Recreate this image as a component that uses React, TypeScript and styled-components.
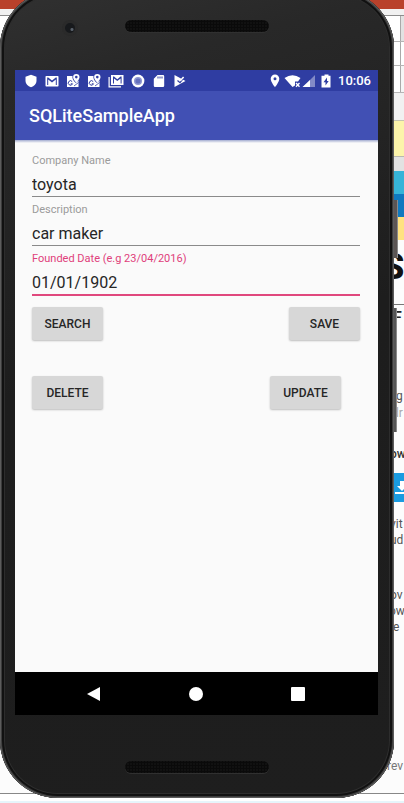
import React from "react";
import styled, { createGlobalStyle } from "styled-components";

const Global = createGlobalStyle`
  * { box-sizing: border-box; }
  body { margin: 0; background: #fcfcfc; font-family: Roboto, "Liberation Sans", sans-serif; }
  button, input { font: inherit; }
`;

const Stage = styled.div`
  display: grid;
  grid-template-columns: minmax(0, 1fr);
  min-height: 100vh;
  overflow: hidden;
`;

/* Desktop page visible around the phone */
const Backdrop = styled.div`
  grid-area: 1 / 1;
  display: flex;
  flex-direction: column;
  align-items: stretch;
  overflow: hidden;
  font-family: Roboto, "Liberation Sans", sans-serif;
`;

const Band = styled.div<{ $h: number; $bg: string; $line?: string }>`
  flex: none;
  height: ${(p) => p.$h}px;
  background: ${(p) => p.$bg};
  border-bottom: ${(p) => (p.$line ? `1px solid ${p.$line}` : "0")};
  display: flex;
  justify-content: flex-end;
`;

const Cell = styled.div<{ $bg: string }>`
  width: 4px;
  background: ${(p) => p.$bg};
  border-left: 1px solid #a9a9a9;
`;

const Snippet = styled.div<{ $h: number; $size?: number; $color?: string; $weight?: number; $w?: number }>`
  flex: none;
  align-self: flex-end;
  width: ${(p) => p.$w ?? 14}px;
  height: ${(p) => p.$h}px;
  line-height: ${(p) => p.$h}px;
  font-size: ${(p) => p.$size ?? 12}px;
  font-weight: ${(p) => p.$weight ?? 400};
  color: ${(p) => p.$color ?? "#555"};
  white-space: nowrap;
`;

const Download = styled.div`
  flex: none;
  align-self: flex-end;
  width: 14px;
  height: 29px;
  background: #1a9be0;
  display: flex;
  align-items: center;
  padding-left: 5px;
  overflow: hidden;

  svg { flex: none; }
`;

const Fill = styled.div<{ $h: number }>`
  flex: none;
  height: ${(p) => p.$h}px;
`;

const Grow = styled.div`
  flex: 1;
`;

const Device = styled.div`
  grid-area: 1 / 1;
  position: relative;
  display: flex;
  margin: -10px 6px 5px 0;
`;

const Body = styled.div`
  flex: 1;
  min-width: 0;
  display: flex;
  flex-direction: column;
  padding: 0 16px 0 15px;
  border-radius: 58px;
  background: linear-gradient(165deg, #313131 0%, #282828 12%, #1d1d1d 45%, #1e1e1e 100%);
  box-shadow: inset 0 0 0 1px #5c5c5c, inset 0 0 0 2px #3b3b3b, inset 0 0 0 4px #111, inset 0 0 0 5px #2d2d2d;
`;

const Keys = styled.div`
  width: 4px;
  padding-top: 210px;
`;

const Key = styled.div<{ $h: number; $gap: number; $w: number; $bg: string }>`
  width: ${(p) => p.$w}px;
  height: ${(p) => p.$h}px;
  margin-bottom: ${(p) => p.$gap}px;
  background: ${(p) => p.$bg};
  border-right: 1px solid #8a8a8a;
`;

const Bezel = styled.div<{ $h: number; $top: number }>`
  height: ${(p) => p.$h}px;
  padding-top: ${(p) => p.$top}px;
  display: grid;
  grid-template-columns: 1fr 144px 1fr;
  align-items: start;
  justify-items: center;
`;

const Camera = styled.div`
  width: 16px;
  height: 16px;
  border-radius: 50%;
  border: 3px solid #2a2a2a;
  background: radial-gradient(circle at 70% 65%, #5a626c 0 1px, #17191c 2px);
`;

const Speaker = styled.div`
  grid-column: 2;
  width: 100%;
  height: 12px;
  border-radius: 6px;
  background: radial-gradient(circle, #0a0a0a 1px, #1b1b1b 2px) 0 0 / 3px 3px;
  box-shadow: 0 1px 0 #303030;
`;

const Screen = styled.main`
  flex: 1;
  display: flex;
  flex-direction: column;
  background: #fafafa;
`;

const StatusBar = styled.div`
  height: 21px;
  display: flex;
  align-items: center;
  justify-content: space-between;
  padding: 0 7px 0 9px;
  background: #2f3da2;
  color: #fff;
`;

const Notices = styled.div`
  width: 163px;
  display: flex;
  align-items: center;
  justify-content: space-between;
`;

const System = styled.div`
  display: flex;
  align-items: center;
`;

const PinGap = styled.span`
  display: flex;
  margin-right: 3px;
`;

const Clock = styled.time`
  margin-left: 2px;
  font-size: 13px;
  line-height: 20px;
  font-weight: 500;
`;

const AppBar = styled.header`
  height: 49px;
  display: flex;
  align-items: center;
  padding: 0 14px;
  background: #4150b4;
  color: #fff;
`;

const Title = styled.h1`
  margin: 0;
  font-size: 18px;
  line-height: 24px;
  font-weight: 500;
`;

const Form = styled.form`
  flex: 1;
  display: flex;
  flex-direction: column;
  padding: 14px 18px 14px 17px;
  background: linear-gradient(#a3acd0, #fafafa 3px);
`;

const Field = styled.label<{ $active?: boolean }>`
  display: flex;
  flex-direction: column;
  margin-bottom: 6px;
  font-size: 11px;
  line-height: 14px;
  color: ${(p) => (p.$active ? "#e0407b" : "#9b9b9b")};
`;

const Input = styled.input<{ $active?: boolean }>`
  width: 100%;
  height: ${(p) => (p.$active ? 30 : 29)}px;
  padding: 4px 0 0;
  border: 0;
  border-bottom: ${(p) => (p.$active ? "2px solid #e0487d" : "1px solid #8a8a8a")};
  border-radius: 0;
  outline: 0;
  background: transparent;
  color: #262626;
  font-size: 16px;
`;

const Actions = styled.div<{ $top: number; $inset?: boolean }>`
  display: flex;
  justify-content: space-between;
  margin-top: ${(p) => p.$top}px;
  padding-right: ${(p) => (p.$inset ? 19 : 0)}px;
`;

const Button = styled.button`
  width: 71px;
  height: 33px;
  padding: 0;
  border: 0;
  border-radius: 2px;
  background: #d7d7d7;
  box-shadow: 0 1px 2px #bdbdbd;
  color: #262626;
  font-size: 12px;
  font-weight: 500;
`;

const NavBar = styled.nav`
  height: 43px;
  display: flex;
  align-items: center;
  justify-content: center;
  gap: 62px;
  padding-right: 2px;
  background: #000;
`;

const NavButton = styled.button`
  width: 40px;
  height: 40px;
  padding: 0;
  border: 0;
  background: none;
  color: #fff;
  display: grid;
  place-items: center;
`;

const Icon = ({ w = 14, vb = 14, children }: { w?: number; vb?: number; children: React.ReactNode }) => (
  <svg width={w} height={14} viewBox={`0 0 ${vb} 14`} fill="currentColor" aria-hidden="true">
    {children}
  </svg>
);

const MapNotice = () => (
  <Icon>
    <path d="M1 2H6.500c-.5 2.500 .6 4.500 3.300 7L12.500 6.500v6.500H1z" />
    <path d="M10.300 0a3.200 3.200 0 0 0-3.200 3.200c0 2.200 3.200 5.500 3.200 5.500s3.200-3.300 3.200-5.500A3.200 3.200 0 0 0 10.300 0zm0 1.800a1.300 1.300 0 1 1 0 2.600 1.300 1.300 0 0 1 0-2.600z" fillRule="evenodd" />
    <path d="M6.200 7.600a2.200 2.200 0 1 0 .3 2.200H4.800" fill="none" stroke="#2f3da2" />
    <path d="M8 12l4.500-3.500" stroke="#2f3da2" strokeWidth=".8" />
  </Icon>
);

export default function App() {
  return (
    <>
      <Global />
      <Stage>
        <Backdrop aria-hidden="true">
          <Band $h={9} $bg="#b9412b" />
          <Band $h={7} $bg="#f1f1f1" $line="#8c8c8c" />
          <Band $h={26} $bg="#fff" $line="#b5b5b5"><Cell $bg="#e2e2e2" /></Band>
          <Band $h={24} $bg="#fff" $line="#b5b5b5"><Cell $bg="#fff" /></Band>
          <Band $h={27} $bg="#fff" $line="#b5b5b5"><Cell $bg="#f6f6f6" /></Band>
          <Band $h={28} $bg="#f1f1f1" $line="#c5c5b0" />
          <Band $h={36} $bg="#fcf4aa" $line="#b8b8b0" />
          <Band $h={14} $bg="#e2e2e2" />
          <Band $h={23} $bg="#36b4d8" />
          <Band $h={23} $bg="#0f79bf" />
          <Band $h={23} $bg="#ffe280" />
          <Fill $h={5} />
          <Snippet $h={44} $size={36} $weight={800} $color="#111" $w={22}>S</Snippet>
          <Band $h={16} $bg="#fdfdfd" $line="#777" />
          <Snippet $h={26} $size={16} $weight={500} $color="#222" $w={11}>F</Snippet>
          <Fill $h={56} />
          <Snippet $h={18} $size={12} $w={8}>g</Snippet>
          <Snippet $h={16} $size={12} $color="#aaa" $w={12}>dr</Snippet>
          <Fill $h={24} />
          <Snippet $h={18} $weight={500} $color="#333">ow</Snippet>
          <Fill $h={10} />
          <Download>
            <svg width="14" height="16" viewBox="0 0 14 16" fill="#fff">
              <path d="M5 1h4v5h3L7 11 2 6h3zM0 12h14v2H0z" />
            </svg>
          </Download>
          <Fill $h={14} />
          <Snippet $h={16}>vit</Snippet>
          <Snippet $h={16}>ud</Snippet>
          <Fill $h={39} />
          <Snippet $h={16}>ov</Snippet>
          <Snippet $h={16} $w={15}>ow</Snippet>
          <Snippet $h={16} $w={15}>re</Snippet>
          <Fill $h={123} />
          <Snippet $h={16} $color="#777" $w={17}>rev</Snippet>
          <Band $h={20} $bg="#fcfcfc" $line="#888" />
          <Band $h={7} $bg="#fff" />
          <Grow />
          <Band $h={2} $bg="#e6f5fb" />
        </Backdrop>

        <Device>
          <Body>
            <Bezel $h={80} $top={30}>
              <Camera />
              <Speaker />
            </Bezel>
            <Screen>
              <StatusBar>
                <Notices>
                  <Icon><path d="M7 .8l5.500 2v4.200c0 3-2.300 5-5.500 6.300C3.800 12 1.500 10 1.500 7V2.800z" /></Icon>
                  <Icon>
                    <path fillRule="evenodd" d="M1.200 2h11.600q.7 0 .7.800v8.900q0 .8-.7.800H1.200q-.7 0-.7-.8V2.800q0-.8.700-.8zM2.200 3.500v7.500h1V5.500L7 8.400l3.800-2.900V11h1V3.500h-1L7 6.500l-3.800-3z" />
                  </Icon>
                  <MapNotice />
                  <MapNotice />
                  <Icon w={16} vb={16}>
                    <path d="M.5 3h1.200v9.300H13v1.200H.5z" />
                    <path fillRule="evenodd" d="M3 1h12.500v10H3zM5 2.500V9.500h1V4.500l3.300 2.600 3.300-2.600v5h1v-7h-1L9.300 5.200 6 2.500z" />
                  </Icon>
                  <Icon>
                    <circle cx="7" cy="7" r="6.400" />
                    <circle cx="7" cy="7" r="4" fill="#8d95d0" />
                    <circle cx="7" cy="7" r="2.500" fill="#6570bd" />
                  </Icon>
                  <Icon>
                    <path fillRule="evenodd" d="M5.500 1H11q1.200 0 1.200 1.200v9.600Q12.200 13 11 13H3q-1.200 0-1.200-1.200V4.700zM5.500 2.500v2h1v-2zM7.500 2.500v2h1v-2zM9.500 2.500v2h1v-2z" />
                  </Icon>
                  <Icon>
                    <path d="M1.500 1l11 6-11 6z" />
                    <path d="M4.500 6.500l2.500 2.200 4-5" fill="none" stroke="#2f3da2" strokeWidth="1.200" />
                    <path d="M7 6l3-3.500 1.200 1-3.200 3.500z" />
                  </Icon>
                </Notices>
                <System>
                  <PinGap>
                    <Icon w={10} vb={10}>
                      <path fillRule="evenodd" d="M5 .5a4.300 4.300 0 0 0-4.300 4.300C.7 8 5 13.300 5 13.300S9.300 8 9.300 4.800A4.300 4.300 0 0 0 5 .5zm0 2.800a1.500 1.500 0 1 1 0 3 1.500 1.500 0 0 1 0-3z" />
                    </Icon>
                  </PinGap>
                  <Icon w={19} vb={19}>
                    <path d="M1.500 4Q9.500-1.500 17.500 4l-2.500 3.500h-3v4L9.500 13z" />
                    <path d="M13 9l3.500 3.800m0-3.800L13 12.800" stroke="currentColor" strokeWidth="1.300" />
                  </Icon>
                  <Icon w={13} vb={13}>
                    <path d="M13 1v12H1z" opacity=".4" />
                    <path d="M8 6v7H.5z" />
                  </Icon>
                  <Icon w={21} vb={21}>
                    <path fillRule="evenodd" d="M9.500 .5h4v1.300h2V13.500H6.500V1.800h3zM12 3.500L8.500 8.200h2v3.300l3.200-4.500H12z" />
                  </Icon>
                  <Clock>10:06</Clock>
                </System>
              </StatusBar>
              <AppBar><Title>SQLiteSampleApp</Title></AppBar>
              <Form onSubmit={(e) => e.preventDefault()}>
                <Field>Company Name<Input type="text" defaultValue="toyota" /></Field>
                <Field>Description<Input type="text" defaultValue="car maker" /></Field>
                <Field $active>Founded Date (e.g 23/04/2016)<Input $active type="text" defaultValue="01/01/1902" /></Field>
                <Actions $top={5}>
                  <Button type="button">SEARCH</Button>
                  <Button type="button">SAVE</Button>
                </Actions>
                <Actions $top={36} $inset>
                  <Button type="button">DELETE</Button>
                  <Button type="button">UPDATE</Button>
                </Actions>
              </Form>
              <NavBar>
                <NavButton aria-label="Back">
                  <svg width="14" height="14" viewBox="0 0 14 14" fill="currentColor"><path d="M0 7L13 0v14z" /></svg>
                </NavButton>
                <NavButton aria-label="Home">
                  <svg width="14" height="14" viewBox="0 0 14 14" fill="currentColor"><circle cx="7" cy="7" r="7" /></svg>
                </NavButton>
                <NavButton aria-label="Overview">
                  <svg width="14" height="14" viewBox="0 0 14 14" fill="currentColor"><rect width="14" height="14" rx="1" /></svg>
                </NavButton>
              </NavBar>
            </Screen>
            <Bezel $h={83} $top={46}>
              <Speaker />
            </Bezel>
          </Body>
          <Keys>
            <Key $h={58} $gap={50} $w={4} $bg="#5b5554" />
            <Key $h={124} $gap={0} $w={3} $bg="#555" />
          </Keys>
        </Device>
      </Stage>
    </>
  );
}
